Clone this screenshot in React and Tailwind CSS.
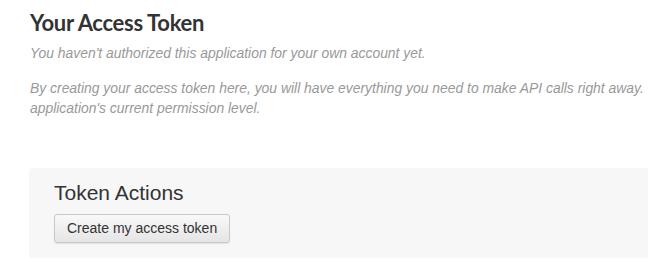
export default function App() {
  return (
    <div className="w-[648px] h-[275px] overflow-hidden bg-white pl-[30px] pt-[8px]" style={{ fontFamily: '"Liberation Sans", Arial, sans-serif' }}>
      <h2 className="text-[22px] leading-[30px] font-bold text-[#333] tracking-[-0.3px]" style={{ fontFamily: 'Lato, "Liberation Sans", sans-serif' }}>
        Your Access Token
      </h2>
      <p className="mt-[5px] text-[13.9px] leading-[20px] italic text-[#999] whitespace-nowrap">
        You haven't authorized this application for your own account yet.
      </p>
      <p className="mt-[15px] text-[13.9px] leading-[20px] italic text-[#999] whitespace-nowrap">
        By creating your access token here, you will have everything you need to make API calls right away.
        <br />
        application's current permission level.
      </p>
      <div className="mt-[50px] -ml-px w-[640px] h-[90px] rounded-[4px] bg-[#f7f7f7] pl-[25px] pt-[13px]">
        <h3 className="text-[21px] leading-[24px] text-[#333]">Token Actions</h3>
        <button className="mt-[9px] h-[29px] px-[12px] rounded-[3px] border border-[#c8c8c8] bg-gradient-to-b from-[#f9f9f9] to-[#e5e5e5] text-[14px] text-[#333] shadow-[0_1px_1px_rgba(0,0,0,0.08)]">
          Create my access token
        </button>
      </div>
    </div>
  );
}
